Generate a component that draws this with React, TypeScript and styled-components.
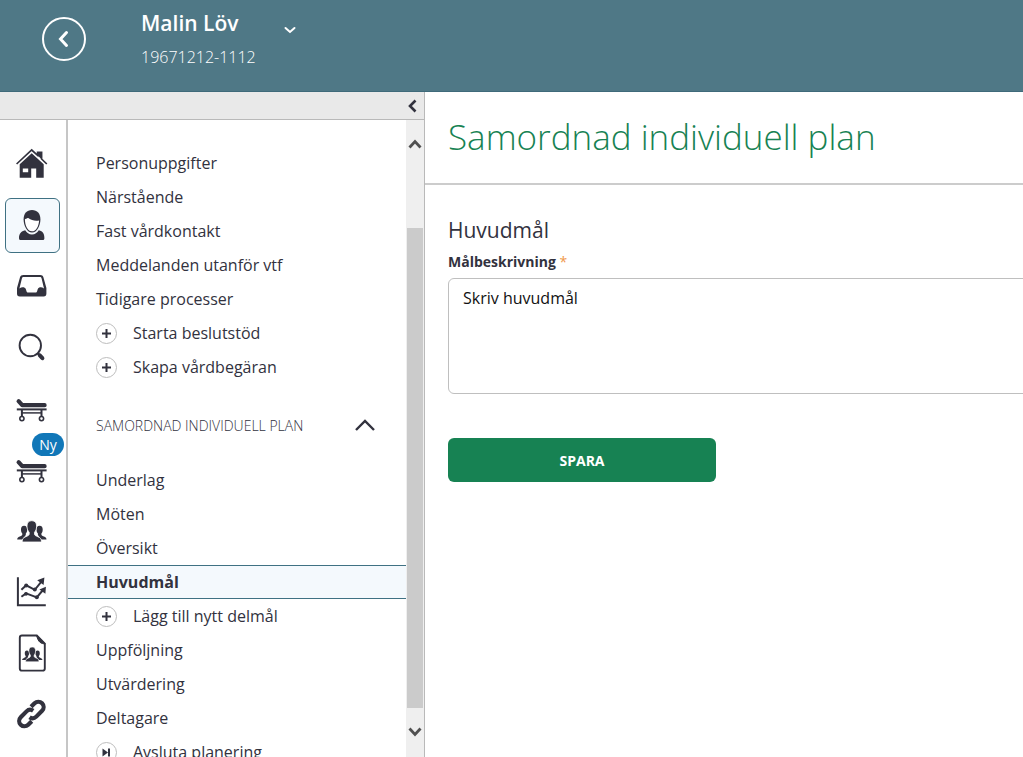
import React from "react";
import styled, { createGlobalStyle, css } from "styled-components";

const ink = "#32323e";
const teal = "#4f7886";
const line = "#b9b9b9";

const GlobalStyle = createGlobalStyle`
  *, *::before, *::after { box-sizing: border-box; }
  body {
    margin: 0;
    background: #fff;
    color: ${ink};
    font-family: "Open Sans", "Noto Sans", sans-serif;
  }
  button, textarea { font-family: inherit; color: inherit; }
`;

const Page = styled.div`
  display: flex;
  flex-direction: column;
  height: 100vh;
  overflow: hidden;
`;

const plainButton = css`
  display: flex;
  align-items: center;
  justify-content: center;
  padding: 0;
  border: 0;
  background: none;
  cursor: pointer;
`;

const Header = styled.header`
  display: flex;
  align-items: flex-start;
  flex: none;
  height: 92px;
  padding: 0 42px;
  background: ${teal};
  border-bottom: 1px solid #3f6a7a;
  color: #fff;
`;

const BackButton = styled.button`
  ${plainButton}
  width: 44px;
  height: 44px;
  margin-top: 17px;
  border: 2px solid #fff;
  border-radius: 50%;
  color: #fff;
`;

const Patient = styled.div`
  margin: 8px 0 0 55px;
  width: 142px;
`;

const PatientName = styled.h2`
  margin: 0;
  font-size: 21px;
  line-height: 30px;
  font-weight: 600;
`;

const PatientId = styled.p`
  margin: 4px 0 0;
  font-size: 16px;
  line-height: 30px;
  font-weight: 300;
`;

const PatientToggle = styled.button`
  ${plainButton}
  width: 14px;
  height: 30px;
  margin-top: 15px;
  color: #fff;
`;

const Body = styled.div`
  display: flex;
  flex: 1;
  min-height: 0;
`;

const Sidebar = styled.aside`
  display: flex;
  flex-direction: column;
  flex: none;
  width: 425px;
  border-right: 1px solid ${line};
`;

const CollapseBar = styled.div`
  display: flex;
  justify-content: flex-end;
  flex: none;
  height: 28px;
  padding-right: 5px;
  background: #e9e9e9;
  border-bottom: 1px solid ${line};
`;

const CollapseButton = styled.button`
  ${plainButton}
  width: 14px;
`;

const Panels = styled.div`
  display: flex;
  flex: 1;
  min-height: 0;
`;

const Rail = styled.nav`
  display: flex;
  flex-direction: column;
  align-items: flex-start;
  gap: 6px;
  flex: none;
  width: 68px;
  padding: 17px 0 0 5px;
  border-right: 2px solid #c6c6c6;
`;

const RailButton = styled.button<{ $active?: boolean }>`
  ${plainButton}
  position: relative;
  flex: none;
  width: 55px;
  height: 55px;
  border: 1px solid ${(p) => (p.$active ? "#3f7183" : "transparent")};
  border-radius: 6px;
  background: ${(p) => (p.$active ? "#f4f9fd" : "none")};
  color: ${ink};
`;

const Badge = styled.span`
  position: absolute;
  top: -10px;
  left: 26px;
  width: 32px;
  border-radius: 12px;
  background: #1177b8;
  color: #fff;
  font-size: 14px;
  line-height: 23px;
  text-align: center;
`;

const Menu = styled.nav`
  flex: 1;
  min-width: 0;
  overflow: hidden;
  padding-top: 26px;
`;

const MenuList = styled.ul`
  margin: 0;
  padding: 0;
  list-style: none;
`;

const MenuLink = styled.a<{ $active?: boolean }>`
  display: flex;
  align-items: center;
  gap: 16px;
  height: 34px;
  padding: 0 28px;
  border: solid ${(p) => (p.$active ? "#3f7183" : "transparent")};
  border-width: 1px 0;
  background: ${(p) => (p.$active ? "#f4f9fd" : "none")};
  color: ${ink};
  font-size: 16px;
  line-height: 24px;
  font-weight: ${(p) => (p.$active ? 700 : 400)};
  text-decoration: none;
`;

const Round = styled.span`
  display: flex;
  align-items: center;
  justify-content: center;
  width: 21px;
  height: 21px;
  border: 1px solid #bdbdbd;
  border-radius: 50%;
`;

const SectionToggle = styled.button`
  ${plainButton}
  justify-content: space-between;
  width: 100%;
  height: 34px;
  margin: 24px 0 21px;
  padding: 0 30px 0 28px;
  font-size: 14px;
  font-weight: 300;
`;

const ScrollTrack = styled.div`
  display: flex;
  flex-direction: column;
  flex: none;
  width: 18px;
  padding: 15px 0 17px;
  background: #efefef;
`;

const ScrollButton = styled.button`
  ${plainButton}
  flex: none;
  height: 17px;
  color: #505050;
`;

const ScrollThumb = styled.div`
  flex: 1;
  margin: 76px 1px 15px;
  background: #cbcbcb;
`;

const Main = styled.main`
  flex: 1;
  min-width: 0;
  overflow: hidden;
`;

const TitleBar = styled.div`
  padding: 17px 23px 18px;
  border-bottom: 2px solid #cccccc;
`;

const Title = styled.h1`
  margin: 0;
  color: #178253;
  font-size: 35px;
  line-height: 56px;
  font-weight: 300;
`;

const Form = styled.form`
  padding: 28px 0 0 23px;
`;

const FormHeading = styled.h3`
  margin: 0;
  font-size: 21px;
  line-height: 34px;
  font-weight: 400;
`;

const Label = styled.label`
  display: block;
  margin: 4px 0 5px;
  font-size: 14px;
  line-height: 22px;
  font-weight: 700;
`;

const Required = styled.span`
  color: #f0994a;
  font-weight: 400;
`;

const TextArea = styled.textarea`
  display: block;
  width: calc(100% + 24px);
  height: 116px;
  padding: 7px 14px;
  border: 1px solid #bfbfbf;
  border-radius: 6px;
  background: #fff;
  color: #111;
  font-size: 16px;
  line-height: 24px;
  resize: none;
`;

const SaveButton = styled.button`
  ${plainButton}
  width: 268px;
  height: 44px;
  margin-top: 44px;
  border-radius: 6px;
  background: #178253;
  color: #fff;
  font-size: 14px;
  font-weight: 700;
`;

type ChevronProps = { d: string; w: number; h: number; stroke: number; round?: boolean };

const Chevron = ({ d, w, h, stroke, round }: ChevronProps) => (
  <svg width={w} height={h} viewBox={`0 0 ${w} ${h}`} fill="none" stroke="currentColor"
    strokeWidth={stroke} strokeLinecap={round ? "round" : "butt"} aria-hidden="true">
    <path d={d} />
  </svg>
);

const Glyph = ({ children }: { children: React.ReactNode }) => (
  <svg width="45" height="45" viewBox="0 0 45 45" fill="currentColor" aria-hidden="true">
    {children}
  </svg>
);

const HomeIcon = () => (
  <Glyph>
    <path d="M6.6 22 21.7 8 27.6 13.3V10.4H31.6V17L36.8 22" fill="none" stroke="currentColor" strokeWidth="1.7" />
    <path d="M27.6 10.4h4v6.8l-4-3.6z" />
    <path fillRule="evenodd" d="M21.7 11.3 33.7 22.3V35.8H26.2V26.4H21.2V35.8H9.7V22.3zM12.8 26.6V30.2H18.2V26.6z" />
  </Glyph>
);

const PersonIcon = () => (
  <Glyph>
    <path d="M9 35.2C9 30.5 11 28.4 15.2 27.2 16.8 29.7 19 31.4 22 31.4 25 31.4 27.2 29.7 28.8 27.2 33 28.4 34.4 30.5 34.4 35.2 34.4 36.5 33.7 37 32.4 37H11C9.7 37 9 36.5 9 35.2z" />
    <path d="M22 7C27.3 7 30.4 10.6 30.4 16.2 30.4 22.5 27 29.6 22 29.6 17 29.6 13.6 22.5 13.6 16.2 13.6 10.6 16.7 7 22 7z" />
    <path fill="#fff" d="M14.9 16.2C17 15.6 18 14.6 18.6 15.3 21.2 17.3 25.5 18.2 29.1 17.4 28.8 23 26.2 28.3 22 28.3 17.8 28.3 15 23 14.9 16.2z" />
  </Glyph>
);

const InboxIcon = () => (
  <Glyph>
    <path fillRule="evenodd" d="M13.4 11H30.2C32 11 32.9 11.7 33.4 13.3L36.4 24V29.6C36.4 31.6 35.6 32.4 33.6 32.4H9.8C7.8 32.4 7 31.6 7 29.6V24L10 13.3C10.5 11.7 11.6 11 13.4 11zM13.8 13.1C12.7 13.1 12.2 13.4 11.9 14.4L9.4 24.4C12 22.6 14.9 23 15.9 25.2L16.5 27.2C16.8 28.1 17.2 28.4 18 28.4H25.6C26.4 28.4 26.8 28.1 27.1 27.2L27.7 25.2C28.7 23 31.5 22.6 34 24.4L31.6 14.4C31.3 13.4 30.8 13.1 29.8 13.1z" />
  </Glyph>
);

const SearchIcon = () => (
  <Glyph>
    <g fill="none" stroke="currentColor">
      <circle cx="20.3" cy="20.5" r="10.7" strokeWidth="1.9" />
      <path d="M27.4 28 29.8 30.4" strokeWidth="2.4" />
      <path d="M29.8 30.4 32.4 33.2" strokeWidth="4" strokeLinecap="round" />
    </g>
  </Glyph>
);

const StretcherIcon = () => (
  <Glyph>
    <path d="M8.6 15.2 12.2 19.2H34.6" fill="none" stroke="currentColor" strokeWidth="4.2" strokeLinecap="round" strokeLinejoin="round" />
    <g fill="none" stroke="currentColor">
      <path d="M6.8 23.4H36.6" strokeWidth="2" />
      <path d="M11.9 24V30.5M31.5 24V30.5" strokeWidth="2" />
      <path d="M12 26.9H31.5" strokeWidth="1.5" />
      <circle cx="11.9" cy="32.6" r="2.1" strokeWidth="1.6" />
      <circle cx="31.5" cy="32.6" r="2.1" strokeWidth="1.6" />
    </g>
  </Glyph>
);

const PeopleShape = () => (
  <>
    <path d="M14.1 17.8C16.3 17.8 17.2 19.3 17.2 21.6 17.2 23.6 16.6 24.8 15.8 25.6V27L12.4 31.6H7.2C7.2 29.6 8 29.2 9.8 28.4 11.6 27.6 12.3 27.3 12.3 26.4V25.6C11.5 24.8 11 23.6 11 21.6 11 19.3 11.9 17.8 14.1 17.8z" />
    <path d="M29.6 17.8C27.4 17.8 26.5 19.3 26.5 21.6 26.5 23.6 27.1 24.8 27.9 25.6V27L31.3 31.6H36.5C36.5 29.6 35.7 29.2 33.9 28.4 32.1 27.6 31.4 27.3 31.4 26.4V25.6C32.2 24.8 32.7 23.6 32.7 21.6 32.7 19.3 31.8 17.8 29.6 17.8z" />
    <path stroke="#fff" strokeWidth="0.8" d="M21.8 12.7C25.2 12.7 26.6 14.8 26.6 18.2 26.6 21 25.7 23 24.5 24.2V26C24.5 27.3 25.5 27.8 28 28.8 30.6 29.9 31.5 30.8 31.5 34H12.2C12.2 30.8 13 29.9 15.6 28.8 18.1 27.8 19.2 27.3 19.2 26V24.2C17.9 23 17 21 17 18.2 17 14.8 18.4 12.7 21.8 12.7z" />
  </>
);

const PeopleIcon = () => (
  <Glyph>
    <PeopleShape />
  </Glyph>
);

const ChartIcon = () => (
  <Glyph>
    <g fill="none" stroke="currentColor" strokeWidth="2">
      <path d="M7.9 8.2V36.3H35.8" />
      <path d="M11.4 20.8 16.2 16.3 24.8 20.8 31.6 12.4M11.4 27.8 16 24.4 26.8 28.4 33 21" />
    </g>
    <path d="M34.4 8.6 33.6 16 27.2 11.2zM35.9 17.8 35.4 24.8 29.4 20.6z" />
    <circle cx="16.2" cy="16.6" r="2" />
    <circle cx="24.8" cy="20.6" r="2" />
    <circle cx="16" cy="24.8" r="1.9" />
    <circle cx="26.8" cy="28.2" r="2" />
  </Glyph>
);

const DocumentIcon = () => (
  <Glyph>
    <path d="M12 5.5H26.8L34.8 13.6V38.4Q34.8 40.6 32.6 40.6H12Q9.8 40.6 9.8 38.4V7.7Q9.8 5.5 12 5.5z" fill="none" stroke="currentColor" strokeWidth="1.9" />
    <path d="M26.6 5.2 35.2 14C31 13.6 28 12.4 26.6 5.2z" stroke="currentColor" />
    <g transform="translate(7.2 8.3) scale(.69)">
      <PeopleShape />
    </g>
  </Glyph>
);

const LinkIcon = () => (
  <Glyph>
    <g transform="rotate(-45 21.4 23)" fill="none" stroke="currentColor" strokeWidth="4.2">
      <path d="M17.8 24Q18.6 28.3 23 28.3H31.2A5.3 5.3 0 0 0 31.2 17.7H26.2" />
      <path d="M25 22Q24.2 17.7 19.8 17.7H11.6A5.3 5.3 0 0 0 11.6 28.3H16.6" />
    </g>
  </Glyph>
);

type RailItem = { label: string; icon: React.ReactNode; active?: boolean; badge?: string };

const railItems: RailItem[] = [
  { label: "Hem", icon: <HomeIcon /> },
  { label: "Person", icon: <PersonIcon />, active: true },
  { label: "Inkorg", icon: <InboxIcon /> },
  { label: "Sök", icon: <SearchIcon /> },
  { label: "Slutenvård", icon: <StretcherIcon /> },
  { label: "Ny slutenvård", icon: <StretcherIcon />, badge: "Ny" },
  { label: "Grupper", icon: <PeopleIcon /> },
  { label: "Statistik", icon: <ChartIcon /> },
  { label: "Dokument", icon: <DocumentIcon /> },
  { label: "Länkar", icon: <LinkIcon /> },
];

const PlusMark = () => (
  <Round>
    <svg width="9" height="9" viewBox="0 0 9 9" stroke="currentColor" strokeWidth="2" aria-hidden="true">
      <path d="M0 4.5H9M4.5 0V9" />
    </svg>
  </Round>
);

const EndMark = () => (
  <Round>
    <svg width="9" height="9" viewBox="0 0 9 9" fill="currentColor" aria-hidden="true">
      <path d="M0.5 0.5 6 4.5 0.5 8.5zM6 0.5H8V8.5H6z" />
    </svg>
  </Round>
);

type Item = { text: string; mark?: "plus" | "end"; active?: boolean };

const personItems: Item[] = [
  { text: "Personuppgifter" },
  { text: "Närstående" },
  { text: "Fast vårdkontakt" },
  { text: "Meddelanden utanför vtf" },
  { text: "Tidigare processer" },
  { text: "Starta beslutstöd", mark: "plus" },
  { text: "Skapa vårdbegäran", mark: "plus" },
];

const planItems: Item[] = [
  { text: "Underlag" },
  { text: "Möten" },
  { text: "Översikt" },
  { text: "Huvudmål", active: true },
  { text: "Lägg till nytt delmål", mark: "plus" },
  { text: "Uppföljning" },
  { text: "Utvärdering" },
  { text: "Deltagare" },
  { text: "Avsluta planering", mark: "end" },
];

const Items = ({ items }: { items: Item[] }) => (
  <MenuList>
    {items.map((item) => (
      <li key={item.text}>
        <MenuLink href="#" $active={item.active}>
          {item.mark === "plus" && <PlusMark />}
          {item.mark === "end" && <EndMark />}
          <span>{item.text}</span>
        </MenuLink>
      </li>
    ))}
  </MenuList>
);

export default function App() {
  return (
    <>
      <GlobalStyle />
      <Page>
        <Header>
          <BackButton aria-label="Tillbaka">
            <Chevron w={14} h={20} d="M9.5 3.5 3.5 10 9.5 16.5" stroke={3} round />
          </BackButton>
          <Patient>
            <PatientName>Malin Löv</PatientName>
            <PatientId>19671212-1112</PatientId>
          </Patient>
          <PatientToggle aria-label="Visa patient">
            <Chevron w={14} h={10} d="M2.5 3 7 7 11.5 3" stroke={2} round />
          </PatientToggle>
        </Header>
        <Body>
          <Sidebar>
            <CollapseBar>
              <CollapseButton aria-label="Fäll ihop menyn">
                <Chevron w={10} h={14} d="M8.5 1.5 3 7 8.5 12.5" stroke={2.6} />
              </CollapseButton>
            </CollapseBar>
            <Panels>
              <Rail>
                {railItems.map((item) => (
                  <RailButton key={item.label} aria-label={item.label} $active={item.active}>
                    {item.icon}
                    {item.badge && <Badge>{item.badge}</Badge>}
                  </RailButton>
                ))}
              </Rail>
              <Menu>
                <Items items={personItems} />
                <SectionToggle aria-expanded="true">
                  <span>SAMORDNAD INDIVIDUELL PLAN</span>
                  <Chevron w={22} h={14} d="M2 12 11 3 20 12" stroke={2.4} />
                </SectionToggle>
                <Items items={planItems} />
              </Menu>
              <ScrollTrack>
                <ScrollButton aria-label="Rulla upp">
                  <Chevron w={14} h={10} d="M1.5 8.5 7 2.5 12.5 8.5" stroke={2.8} />
                </ScrollButton>
                <ScrollThumb />
                <ScrollButton aria-label="Rulla ned">
                  <Chevron w={14} h={10} d="M1.5 1.5 7 7.5 12.5 1.5" stroke={2.8} />
                </ScrollButton>
              </ScrollTrack>
            </Panels>
          </Sidebar>
          <Main>
            <TitleBar>
              <Title>Samordnad individuell plan</Title>
            </TitleBar>
            <Form onSubmit={(e) => e.preventDefault()}>
              <FormHeading>Huvudmål</FormHeading>
              <Label htmlFor="goal">
                Målbeskrivning <Required>*</Required>
              </Label>
              <TextArea id="goal" defaultValue="Skriv huvudmål" />
              <SaveButton type="submit">SPARA</SaveButton>
            </Form>
          </Main>
        </Body>
      </Page>
    </>
  );
}
